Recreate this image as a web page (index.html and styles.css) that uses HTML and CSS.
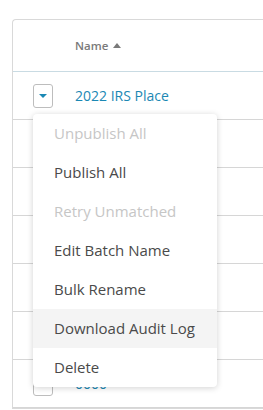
FILE: index.html
```html
<!DOCTYPE html>
<html lang="en">
<head>
    <meta charset="UTF-8">
    <meta name="viewport" content="width=device-width, initial-scale=1.0">
    <title>Batches</title>
    <link rel="stylesheet" href="styles.css">
</head>
<body>
    <div class="table">
        <div class="head">
            <span class="head-name">Name <span class="sort-up"></span></span>
        </div>

        <div class="row">
            <div class="toggle-wrap">
                <button class="toggle"><span class="caret"></span></button>
                <ul class="menu">
                    <li class="disabled">Unpublish All</li>
                    <li>Publish All</li>
                    <li class="disabled">Retry Unmatched</li>
                    <li>Edit Batch Name</li>
                    <li>Bulk Rename</li>
                    <li class="active">Download Audit Log</li>
                    <li>Delete</li>
                </ul>
            </div>
            <a href="#" class="name">2022 IRS Place</a>
        </div>
        <!-- rows under the open menu -->
        <div class="row"></div>
        <div class="row"></div>
        <div class="row"></div>
        <div class="row"></div>
        <div class="row"></div>
        <div class="row">
            <div class="toggle-wrap"><button class="toggle"><span class="caret"></span></button></div>
            <a href="#" class="name">0000</a>
        </div>
    </div>
</body>
</html>
```

FILE: styles.css
```css
body {
    margin: 0;
    padding: 19px 0 0 12px;
    font-family: "Open Sans", Lato, sans-serif;
    background: white;
    overflow: hidden;
}

.table {
    border: 1px solid #d9d9d9;
    border-right: none;
    border-radius: 4px 0 0 0;
}

.head {
    height: 52px;
    display: flex;
    align-items: center;
    padding-left: 62px;
    border-bottom: 1px solid #c9dbe3;
    box-sizing: border-box;
}

.head-name {
    font-size: 11.5px;
    font-weight: 600;
    color: #7a7a7a;
    display: flex;
    align-items: center;
    gap: 5px;
}

.sort-up {
    width: 0;
    height: 0;
    border-left: 4.5px solid transparent;
    border-right: 4.5px solid transparent;
    border-bottom: 5px solid #7a7a7a;
}

.row {
    height: 48px;
    display: flex;
    align-items: center;
    padding-left: 20px;
    border-bottom: 1px solid #d6d6d6;
    box-sizing: border-box;
}

.toggle-wrap {
    position: relative;
    margin-right: 22px;
}

.toggle {
    width: 20px;
    height: 24px;
    padding: 0;
    border: 1px solid #bdbdbd;
    border-radius: 3px;
    background: white;
    display: flex;
    align-items: center;
    justify-content: center;
}

.caret {
    width: 0;
    height: 0;
    border-left: 4px solid transparent;
    border-right: 4px solid transparent;
    border-top: 4px solid #1b88b4;
}

.name {
    font-size: 14px;
    color: #1b88b4;
    text-decoration: none;
}

.menu {
    position: absolute;
    top: 30px;
    left: 0;
    z-index: 2;
    width: 184px;
    margin: 0;
    padding: 0;
    list-style: none;
    background: white;
    border-radius: 4px;
    box-shadow: 0 1px 6px rgba(0, 0, 0, 0.18);
}

.menu li {
    height: 39px;
    display: flex;
    align-items: center;
    padding-left: 21px;
    font-size: 15px;
    color: #4a4a4a;
}

.menu li.disabled {
    color: #c6c6c6;
}

.menu li.active {
    background: #f4f4f4;
}
```
